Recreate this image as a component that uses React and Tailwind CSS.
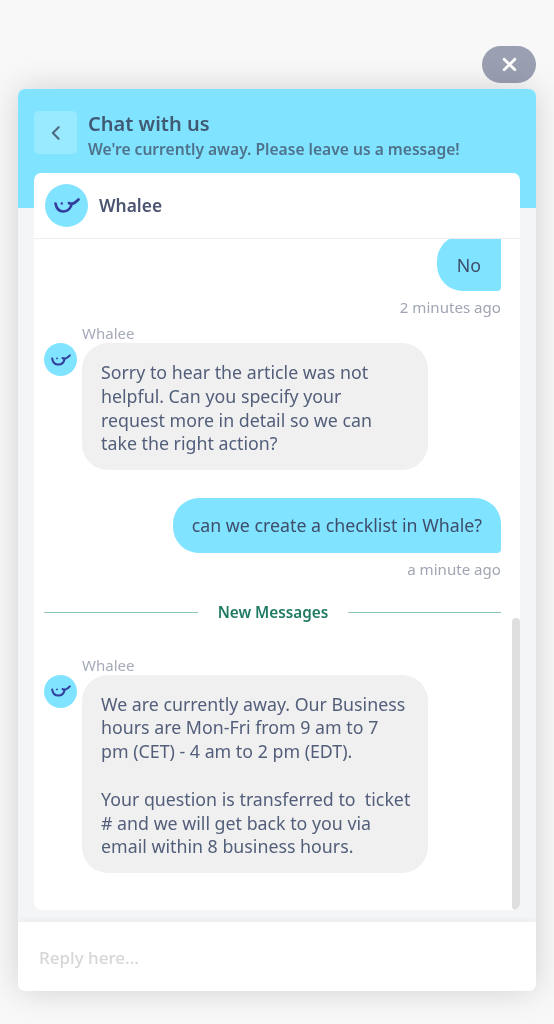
const font = { fontFamily: '"Noto Sans", sans-serif' };

function Smile({ className }) {
  return (
    <svg viewBox="0 0 26 15" className={className} fill="none" stroke="#333d9c" strokeWidth="2.6" strokeLinecap="round">
      <path d="M1.5 5.5 C2.5 11 6 13.5 9.5 13.5 C14 13.5 17 10 17.8 5.5" />
      <path d="M15 5 C17.5 7.5 21 5 24.5 1.5" />
      <circle cx="7.8" cy="5.4" r="1.2" fill="#333d9c" stroke="none" />
    </svg>
  );
}

function Avatar() {
  return (
    <div className="w-[33px] h-[33px] rounded-full bg-[#80e3ff] flex items-center justify-center shrink-0">
      <Smile className="w-[20px] h-[12px]" />
    </div>
  );
}

function AgentMessage({ lines }) {
  return (
    <div className="flex gap-[5px] pl-[10px]">
      <div className="pt-[20px]">
        <Avatar />
      </div>
      <div className="w-[346px]">
        <div className="text-[15px] leading-[20px] text-[#a6abb9] h-[20px]">Whalee</div>
        <div className="bg-[#f0f0f0] rounded-[26px] pl-[19px] pr-[14px] pt-[18px] pb-[13.5px] text-[17.8px] leading-[23.8px] text-[#525e7a]">
          {lines.map((l, i) => (
            <div key={i} className="h-[23.8px] whitespace-pre">{l}</div>
          ))}
        </div>
      </div>
    </div>
  );
}

function UserMessage({ text, time, className, bubble }) {
  return (
    <div className={`flex flex-col items-end pr-[19px] ${className}`}>
      <div className={`bg-[#80e3ff] text-[#3f4d6b] text-[17.8px] leading-[24px] rounded-l-[26px] rounded-tr-[26px] rounded-br-[4px] ${bubble}`}>{text}</div>
      <div className="text-[15.1px] leading-[20px] text-[#a0a5b3] mt-[6px]">{time}</div>
    </div>
  );
}

export default function App() {
  return (
    <div style={font} className="w-[554px] h-[1024px] bg-[#f8f8f8] overflow-hidden flex flex-col items-end blur-[0.4px]">
      <div className="mt-[46px] mr-[18px] w-[54px] h-[37px] rounded-[19px] bg-[#9aa0b2] flex items-center justify-center">
        <svg viewBox="0 0 14 14" className="w-[15px] h-[15px]" fill="none" stroke="#ffffff" strokeWidth="2.6" strokeLinecap="round">
          <path d="M2 2 L12 12 M12 2 L2 12" />
        </svg>
      </div>

      <div className="mt-[6px] mr-[18px] w-[518px] h-[902px] rounded-[7px] bg-[#f4f5f7] overflow-hidden flex flex-col shadow-[0_0_32px_rgba(0,0,0,0.16)]">
        <div className="h-[119px] bg-[#80e3ff] shrink-0 flex items-start gap-[11px] pl-[16px] pt-[22px]">
          <div className="w-[43px] h-[43px] rounded-[5px] bg-[#99e9ff] flex items-center justify-center">
            <svg viewBox="0 0 12 18" className="w-[11px] h-[16px]" fill="none" stroke="#4f6a80" strokeWidth="2.4" strokeLinecap="round" strokeLinejoin="round">
              <path d="M9.5 2.5 L3 9 L9.5 15.5" />
            </svg>
          </div>
          <div>
            <div className="text-[20px] leading-[26px] font-semibold text-[#405a74]">Chat with us</div>
            <div className="text-[15.6px] leading-[22px] mt-[1px] font-semibold text-[#4f728c]">We're currently away. Please leave us a message!</div>
          </div>
        </div>

        <div className="relative mx-[16px] -mt-[35px] h-[737px] shrink-0 bg-white rounded-[7px] flex flex-col overflow-hidden">
          <div className="h-[66px] shrink-0 border-b border-[#eeeeee] flex items-center gap-[11px] pl-[11px]">
            <div className="w-[43px] h-[43px] rounded-full bg-[#80e3ff] flex items-center justify-center">
              <Smile className="w-[26px] h-[15px]" />
            </div>
            <span className="text-[17.4px] font-semibold text-[#4a5470]">Whalee</span>
          </div>

          <div className="flex-1 overflow-hidden">
            <UserMessage text="No" time="2 minutes ago" className="-mt-[4px]" bubble="w-[64px] h-[56px] pt-[4px] flex items-center justify-center rounded-tr-none" />
            <div className="mt-[6px]">
              <AgentMessage lines={["Sorry to hear the article was not", "helpful. Can you specify your", "request more in detail so we can", "take the right action?"]} />
            </div>
            <UserMessage text="can we create a checklist in Whale?" time="a minute ago" className="mt-[28px]" bubble="h-[55px] px-[19px] flex items-center" />
            <div className="mt-[22px] ml-[10px] mr-[19px] flex items-center justify-between h-[24px]">
              <div className="w-[154px] h-px bg-[#8cc8b8]"></div>
              <span className="text-[15.3px] font-semibold text-[#1f7a63]">New Messages</span>
              <div className="w-[153px] h-px bg-[#8cc8b8]"></div>
            </div>
            <div className="mt-[30px]">
              <AgentMessage lines={["We are currently away. Our Business", "hours are Mon-Fri from 9 am to 7", "pm (CET) - 4 am to 2 pm (EDT).", "", "Your question is transferred to  ticket", "# and we will get back to you via", "email within 8 business hours."]} />
            </div>
          </div>

          <div className="absolute right-0 bottom-0 w-[8px] h-[292px] rounded-[4px] bg-[#dedede]"></div>
        </div>

        <div className="flex-1"></div>
        <div className="h-[69px] shrink-0 bg-white flex items-center pl-[21px] pt-[3px] shadow-[0_-2px_6px_rgba(0,0,0,0.04)]">
          <span className="text-[17px] text-[#d6d6d6] font-medium">Reply here...</span>
        </div>
      </div>
    </div>
  );
}
